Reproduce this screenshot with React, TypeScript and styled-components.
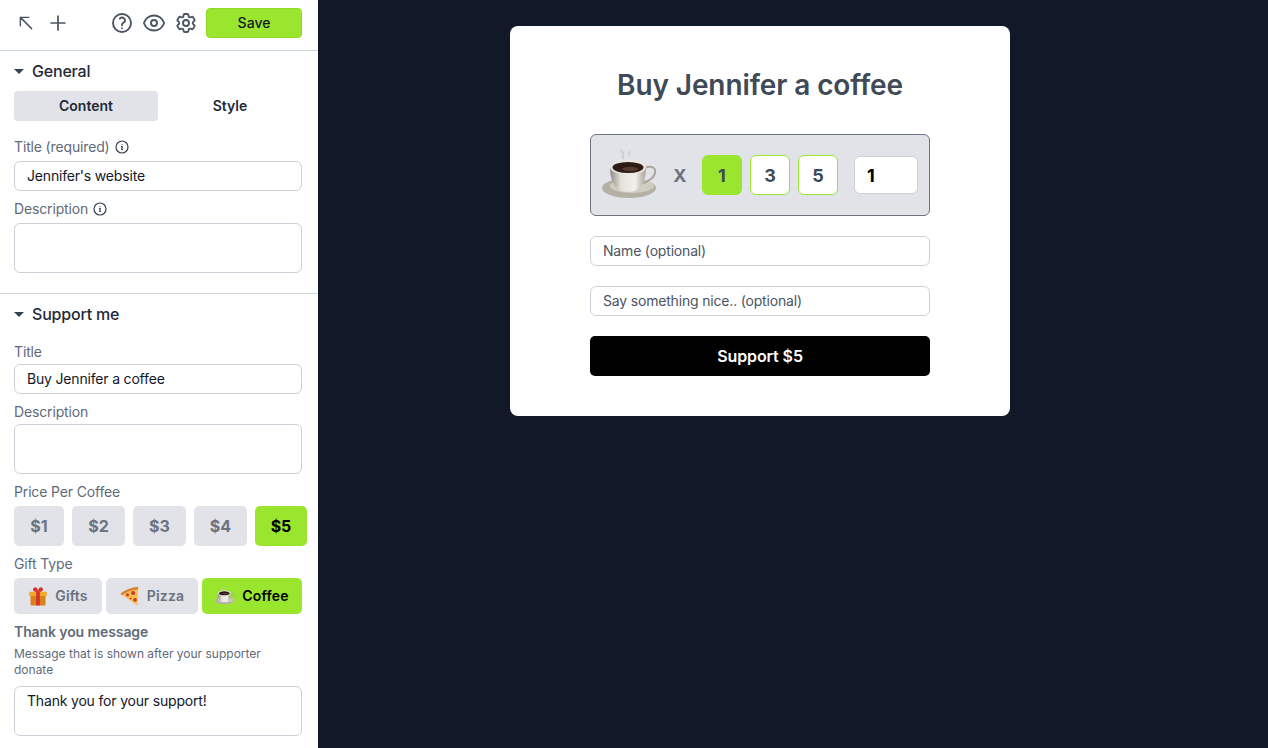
import styled, { createGlobalStyle } from "styled-components";
import {
  HiOutlineArrowUpLeft,
  HiOutlinePlus,
  HiOutlineQuestionMarkCircle,
  HiOutlineEye,
  HiOutlineCog6Tooth,
  HiOutlineInformationCircle,
} from "react-icons/hi2";

const GlobalStyle = createGlobalStyle`
  html, body { margin: 0; padding: 0; height: 100%; }
  body { font-family: Inter, "Liberation Sans", sans-serif; background: #111827; overflow: hidden; }
  * { box-sizing: border-box; }
`;

const CoffeeEmoji = ({ size, id }: { size: number; id: string }) => (
  <svg width={size} height={size} viewBox="0 0 56 56">
    <defs>
      <linearGradient id={id} x1="0" x2="1" y1="0" y2="0">
        <stop offset="0" stopColor="#8f8b82" />
        <stop offset="0.3" stopColor="#e4e1da" />
        <stop offset="0.7" stopColor="#f2f0eb" />
        <stop offset="1" stopColor="#a5a198" />
      </linearGradient>
    </defs>
    <path d="M20 3c-2 2 3 3 1 5s1 3 0 4M27 4c2 2-2 3 0 5" stroke="#cfcfcf" strokeWidth="2" fill="none" />
    <ellipse cx="27" cy="41" rx="27" ry="10" fill="#b4b0a4" />
    <ellipse cx="30" cy="39" rx="22" ry="7" fill="#cfccc2" />
    <path d="M43 21c7-3 11 0 10 5-1 5-8 9-12 10" stroke="#aaa69c" strokeWidth="2" fill="none" />
    <path d="M8 20c0 12 4 25 18 25s18-13 18-25z" fill={`url(#${id})`} />
    <ellipse cx="26" cy="20" rx="18" ry="7.5" fill="#e9e7e1" />
    <ellipse cx="26" cy="20.5" rx="15.5" ry="5.5" fill="#2e1c16" />
    <ellipse cx="28" cy="22" rx="8" ry="2.2" fill="#553a2e" />
  </svg>
);

const GiftEmoji = ({ size }: { size: number }) => (
  <svg width={size} height={size} viewBox="0 0 32 32">
    <path d="M9 3c3-3 7 1 7 5 0-4 4-8 7-5s-1 7-7 7-10-4-7-7z" fill="#d9322d" />
    <rect x="4" y="14" width="24" height="17" rx="1" fill="#d9831c" />
    <rect x="2" y="9" width="28" height="7" rx="1" fill="#f2a72e" />
    <rect x="13" y="9" width="6" height="22" fill="#d9322d" />
  </svg>
);

const PizzaEmoji = ({ size }: { size: number }) => (
  <svg width={size} height={size} viewBox="0 0 32 32">
    <path d="M29 3 2 13l26 18z" fill="#f6bf52" />
    <path d="M29 1C18 2 8 6 1 12l2 3C10 9 19 6 29 5z" fill="#d97f33" />
    <circle cx="21" cy="11" r="3.2" fill="#cf3a2a" />
    <circle cx="12" cy="14" r="2.6" fill="#cf3a2a" />
    <circle cx="24" cy="22" r="3" fill="#cf3a2a" />
    <circle cx="17" cy="20" r="1.6" fill="#cf3a2a" />
  </svg>
);

const Page = styled.div`
  display: flex;
  width: 1268px;
  height: 748px;
  overflow: hidden;
`;

const Sidebar = styled.aside`
  width: 318px;
  height: 748px;
  flex: none;
  background: #fff;
  overflow: hidden;
`;

const Toolbar = styled.div`
  display: flex;
  align-items: center;
  height: 51px;
  padding: 0 16px 5px 17px;
  border-bottom: 1px solid #cbd5e1;
`;

const IconButton = styled.span<{ $size: number; $ml?: number }>`
  display: flex;
  color: #4b5563;
  margin-left: ${(p) => p.$ml ?? 0}px;
  font-size: ${(p) => p.$size}px;

  svg {
    stroke-width: 1.9;
  }
`;

const SaveButton = styled.button`
  width: 96px;
  height: 30px;
  margin-left: 8px;
  border: 1px solid #8fdb28;
  border-radius: 4px;
  background: #9ae62e;
  color: #111827;
  font: 500 14px Inter, sans-serif;
`;

const Section = styled.section<{ $bordered?: boolean }>`
  padding: 10px 16px 0 14px;
  height: ${(p) => (p.$bordered ? "243px" : "auto")};
  border-bottom: ${(p) => (p.$bordered ? "1px solid #d1d5db" : "none")};
`;

const SectionHeader = styled.div`
  display: flex;
  align-items: center;
  height: 20px;
  margin-bottom: 10px;
  color: #1f2937;
  font-size: 16px;
  line-height: 20px;
  font-weight: 500;
  letter-spacing: -0.2px;
`;

const Caret = styled.span`
  width: 0;
  height: 0;
  margin-right: 8px;
  border-left: 5px solid transparent;
  border-right: 5px solid transparent;
  border-top: 5px solid #374151;
`;

const Tabs = styled.div`
  display: flex;
  width: 288px;
`;

const Tab = styled.div<{ $active?: boolean }>`
  flex: 1;
  height: 30px;
  padding-bottom: 1px;
  display: flex;
  align-items: center;
  justify-content: center;
  border-radius: 4px;
  background: ${(p) => (p.$active ? "#e1e3e9" : "transparent")};
  color: #1f2937;
  font-size: 14px;
  font-weight: 600;
`;

const Label = styled.div<{ $top: number; $gap: number }>`
  display: flex;
  align-items: center;
  gap: 4px;
  height: 20px;
  margin: ${(p) => p.$top}px 0 ${(p) => p.$gap}px;
  color: #616a78;
  font-size: 14px;
  line-height: 20px;
  letter-spacing: -0.15px;

  svg {
    color: #374151;
    font-size: 16px;
    stroke-width: 1.8;
  }
`;

const TextInput = styled.input`
  display: block;
  width: 288px;
  height: 30px;
  padding: 0 12px 2px;
  border: 1px solid #cbd0d9;
  border-radius: 6px;
  background: #fff;
  color: #111827;
  font: 400 14px Inter, sans-serif;
  letter-spacing: -0.18px;
  outline: none;

  &::placeholder {
    color: #4b5563;
    opacity: 1;
  }
`;

const TextArea = styled.textarea`
  display: block;
  width: 288px;
  height: 50px;
  padding: 4px 12px;
  border: 1px solid #cbd0d9;
  border-radius: 6px;
  background: #fff;
  color: #111827;
  font: 400 14px/20px Inter, sans-serif;
  letter-spacing: -0.18px;
  outline: none;
  resize: none;
`;

const ChoiceRow = styled.div`
  display: flex;
  width: 310px;
`;

const PriceButton = styled.button<{ $w: number; $active?: boolean }>`
  width: ${(p) => p.$w}px;
  height: 40px;
  flex: none;
  margin-right: 8px;
  border: none;
  border-radius: 5px;
  background: ${(p) => (p.$active ? "#9ae62e" : "#e1e3e9")};
  color: ${(p) => (p.$active ? "#000" : "#6b7280")};
  font: 700 16px Inter, sans-serif;
  padding: 0;
`;

const GiftButton = styled.button<{ $w: number; $active?: boolean }>`
  width: ${(p) => p.$w}px;
  height: 36px;
  flex: none;
  display: flex;
  align-items: center;
  justify-content: center;
  gap: 7px;
  margin-right: 4px;
  padding: 0 0 1px;
  border: none;
  border-radius: 5px;
  background: ${(p) => (p.$active ? "#9ae62e" : "#e1e3e9")};
  color: ${(p) => (p.$active ? "#000" : "#6b7280")};
  font: 600 14px Inter, sans-serif;
  letter-spacing: 0.15px;
`;

const StrongLabel = styled.div`
  margin-top: 8px;
  height: 20px;
  color: #616a78;
  font-size: 14px;
  line-height: 20px;
  font-weight: 600;
  letter-spacing: -0.1px;
`;

const Hint = styled.div`
  width: 280px;
  margin: 4px 0 8px;
  color: #616a78;
  font-size: 12px;
  line-height: 16px;
`;

const Preview = styled.main`
  flex: 1;
  display: flex;
  align-items: flex-start;
  padding: 26px 0 0 192px;
  background: #111827;
`;

const Card = styled.div`
  width: 500px;
  height: 390px;
  padding: 41px 80px 40px;
  border-radius: 8px;
  background: #fff;
`;

const CardTitle = styled.h1`
  margin: 0 0 30px;
  height: 37px;
  color: #404a57;
  font-size: 28px;
  line-height: 37px;
  font-weight: 600;
  letter-spacing: -0.1px;
  text-align: center;
  white-space: nowrap;
`;

const GiftBox = styled.div`
  display: flex;
  align-items: center;
  height: 82px;
  margin-bottom: 20px;
  padding: 0 11px;
  border: 1px solid #6b7280;
  border-radius: 6px;
  background: #e1e3e9;
`;

const Times = styled.span`
  width: 16px;
  margin: 0 14px;
  color: #6b7280;
  font-size: 18px;
  font-weight: 700;
  text-align: center;
`;

const QtyButton = styled.button<{ $active?: boolean }>`
  width: 40px;
  height: 40px;
  margin-right: 8px;
  padding: 0;
  border: 1px solid #9ae62e;
  border-radius: 6px;
  background: ${(p) => (p.$active ? "#9ae62e" : "#fff")};
  color: #404a57;
  font: 700 18px Inter, sans-serif;
`;

const QtyInput = styled(TextInput)`
  width: 64px;
  height: 38px;
  margin-left: 8px;
  padding: 0 12px;
  color: #000;
  font-size: 18px;
  font-weight: 700;
`;

const CardField = styled(TextInput)`
  width: 340px;
  margin-bottom: 20px;
`;

const SupportButton = styled.button`
  width: 340px;
  height: 40px;
  border: none;
  border-radius: 5px;
  background: #000;
  color: #fff;
  font: 600 16px Inter, sans-serif;
  letter-spacing: -0.1px;
`;

const App = () => {
  const prices = [
    { label: "$1", w: 50 },
    { label: "$2", w: 53 },
    { label: "$3", w: 53 },
    { label: "$4", w: 53 },
    { label: "$5", w: 52, active: true },
  ];

  return (
    <Page>
      <GlobalStyle />
      <Sidebar>
        <Toolbar>
          <IconButton $size={18}><HiOutlineArrowUpLeft /></IconButton>
          <IconButton $size={22} $ml={12}><HiOutlinePlus /></IconButton>
          <IconButton $size={24} $ml={41}><HiOutlineQuestionMarkCircle /></IconButton>
          <IconButton $size={24} $ml={8}><HiOutlineEye /></IconButton>
          <IconButton $size={24} $ml={8}><HiOutlineCog6Tooth /></IconButton>
          <SaveButton>Save</SaveButton>
        </Toolbar>

        <Section $bordered>
          <SectionHeader><Caret />General</SectionHeader>
          <Tabs>
            <Tab $active>Content</Tab>
            <Tab>Style</Tab>
          </Tabs>
          <Label $top={16} $gap={4}>Title (required) <HiOutlineInformationCircle /></Label>
          <TextInput defaultValue="Jennifer's website" />
          <Label $top={8} $gap={4}>Description <HiOutlineInformationCircle /></Label>
          <TextArea />
        </Section>

        <Section>
          <SectionHeader><Caret />Support me</SectionHeader>
          <Label $top={18} $gap={2}>Title</Label>
          <TextInput defaultValue="Buy Jennifer a coffee" />
          <Label $top={8} $gap={2}>Description</Label>
          <TextArea />
          <Label $top={8} $gap={4}>Price Per Coffee</Label>
          <ChoiceRow>
            {prices.map((p) => (
              <PriceButton key={p.label} $w={p.w} $active={p.active}>{p.label}</PriceButton>
            ))}
          </ChoiceRow>
          <Label $top={8} $gap={4}>Gift Type</Label>
          <ChoiceRow>
            <GiftButton $w={88}><GiftEmoji size={20} />Gifts</GiftButton>
            <GiftButton $w={92}><PizzaEmoji size={20} />Pizza</GiftButton>
            <GiftButton $w={100} $active><CoffeeEmoji size={20} id="cup-small" />Coffee</GiftButton>
          </ChoiceRow>
          <StrongLabel>Thank you message</StrongLabel>
          <Hint>Message that is shown after your supporter donate</Hint>
          <TextArea defaultValue="Thank you for your support!" />
        </Section>
      </Sidebar>

      <Preview>
        <Card>
          <CardTitle>Buy Jennifer a coffee</CardTitle>
          <GiftBox>
            <CoffeeEmoji size={56} id="cup-large" />
            <Times>X</Times>
            <QtyButton $active>1</QtyButton>
            <QtyButton>3</QtyButton>
            <QtyButton>5</QtyButton>
            <QtyInput defaultValue="1" />
          </GiftBox>
          <CardField placeholder="Name (optional)" />
          <CardField placeholder="Say something nice.. (optional)" />
          <SupportButton>Support $5</SupportButton>
        </Card>
      </Preview>
    </Page>
  );
};

export default App;
